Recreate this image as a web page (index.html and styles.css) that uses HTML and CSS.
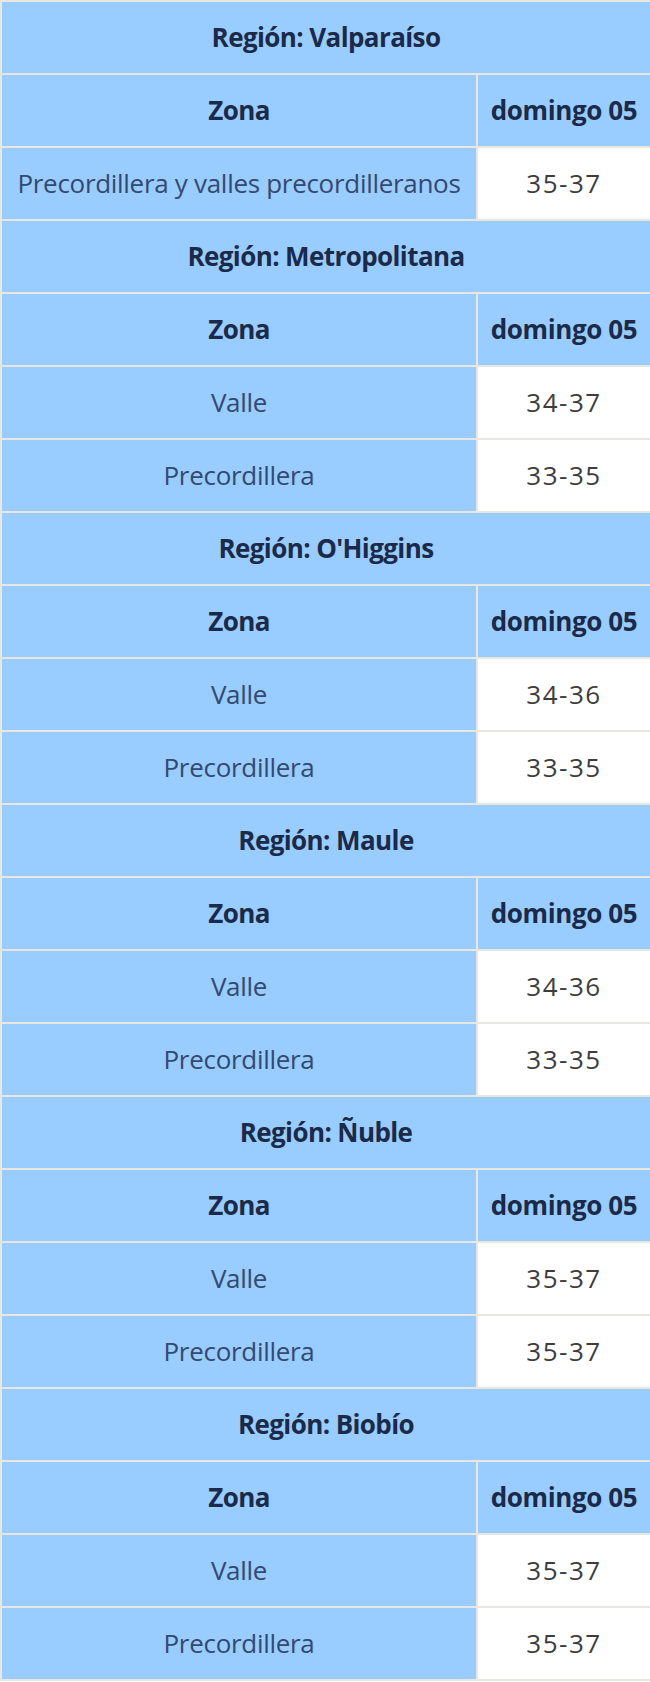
FILE: index.html
```html
<!DOCTYPE html>
<html lang="es">
<head>
<meta charset="utf-8">
<title>Temperaturas</title>
<link rel="stylesheet" href="styles.css">
</head>
<body>
<table class="temps">
  <colgroup>
    <col class="col-zone">
    <col class="col-day">
  </colgroup>
  <tbody>
    <tr><th class="region" colspan="2">Región: Valparaíso</th></tr>
    <tr><th class="zona">Zona</th><th class="dia">domingo 05</th></tr>
    <tr><td class="zone-name">Precordillera y valles precordilleranos</td><td class="val">35-37</td></tr>

    <tr><th class="region" colspan="2">Región: Metropolitana</th></tr>
    <tr><th class="zona">Zona</th><th class="dia">domingo 05</th></tr>
    <tr><td class="zone-name">Valle</td><td class="val">34-37</td></tr>
    <tr><td class="zone-name">Precordillera</td><td class="val">33-35</td></tr>

    <tr><th class="region" colspan="2">Región: O'Higgins</th></tr>
    <tr><th class="zona">Zona</th><th class="dia">domingo 05</th></tr>
    <tr><td class="zone-name">Valle</td><td class="val">34-36</td></tr>
    <tr><td class="zone-name">Precordillera</td><td class="val">33-35</td></tr>

    <tr><th class="region" colspan="2">Región: Maule</th></tr>
    <tr><th class="zona">Zona</th><th class="dia">domingo 05</th></tr>
    <tr><td class="zone-name">Valle</td><td class="val">34-36</td></tr>
    <tr><td class="zone-name">Precordillera</td><td class="val">33-35</td></tr>

    <tr><th class="region" colspan="2">Región: Ñuble</th></tr>
    <tr><th class="zona">Zona</th><th class="dia">domingo 05</th></tr>
    <tr><td class="zone-name">Valle</td><td class="val">35-37</td></tr>
    <tr><td class="zone-name">Precordillera</td><td class="val">35-37</td></tr>

    <tr><th class="region" colspan="2">Región: Biobío</th></tr>
    <tr><th class="zona">Zona</th><th class="dia">domingo 05</th></tr>
    <tr><td class="zone-name">Valle</td><td class="val">35-37</td></tr>
    <tr><td class="zone-name">Precordillera</td><td class="val">35-37</td></tr>
  </tbody>
</table>
</body>
</html>
```

FILE: styles.css
```css
html, body {
  margin: 0;
  padding: 0;
  background: #ffffff;
}

.temps {
  width: 650px;
  border-collapse: collapse;
  table-layout: fixed;
  font-family: "Open Sans", "Noto Sans", sans-serif;
}

.col-zone {
  width: 476px;
}

.col-day {
  width: 174px;
}

.temps th,
.temps td {
  height: 73px;
  padding: 0;
  box-sizing: border-box;
  border: 2px solid #e9e7e2;
  text-align: center;
  vertical-align: middle;
  background: #99ccff;
  font-size: 26px;
  line-height: 1.2;
  white-space: nowrap;
}

.temps th {
  font-weight: 700;
  color: #1b2a48;
  letter-spacing: -0.6px;
}

.temps .dia {
  letter-spacing: -0.4px;
}

.temps .zone-name {
  font-weight: 400;
  color: #34496e;
  letter-spacing: -0.3px;
}

.temps .val {
  background: #ffffff;
  color: #3d3d3d;
  font-weight: 400;
  letter-spacing: 1.5px;
}
```
